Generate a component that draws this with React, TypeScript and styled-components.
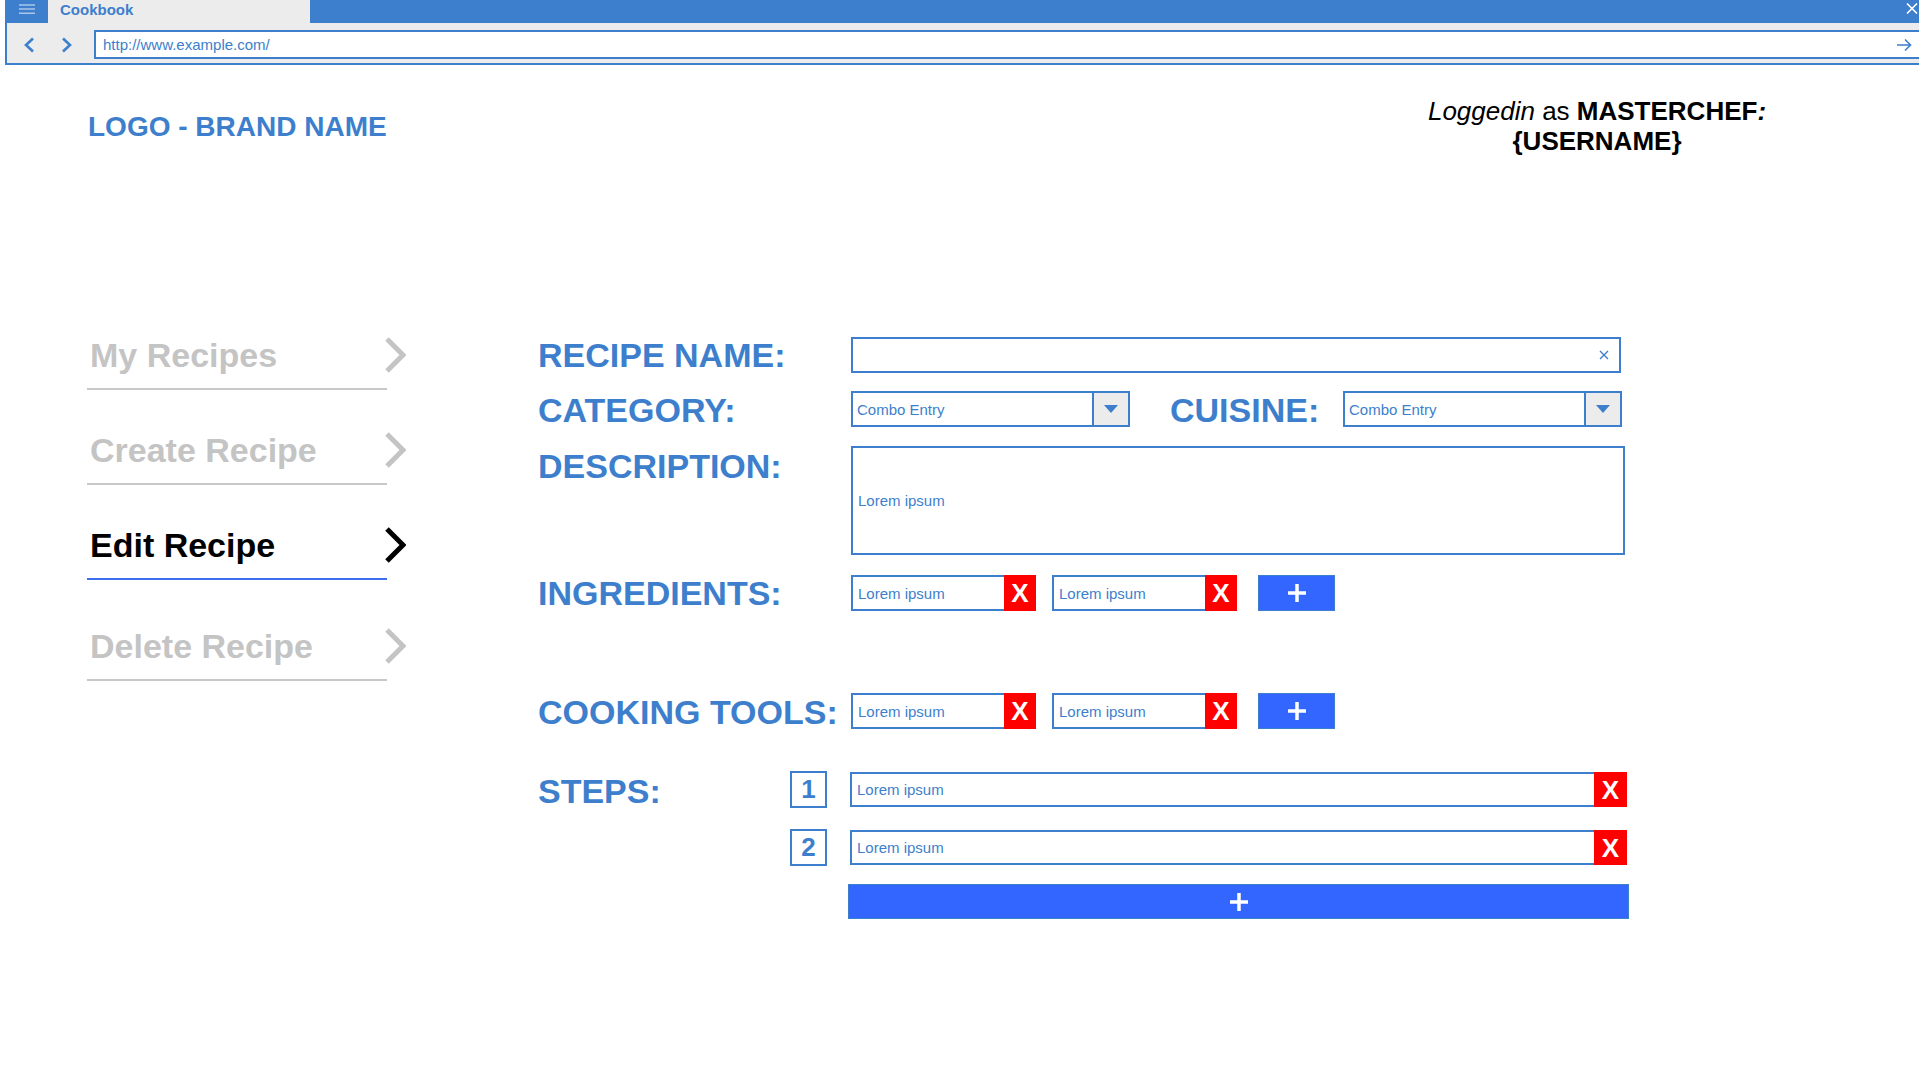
import React from 'react';
import styled, { createGlobalStyle } from 'styled-components';

const BLUE = '#3d7fcc';
const BRIGHT = '#3366ff';
const RED = '#ff0000';
const GRAY = '#ececec';
const FONT = '"Liberation Sans", Arial, Helvetica, sans-serif';

const Global = createGlobalStyle`
  html, body { margin: 0; padding: 0; background: #fff; }
  body { font-family: ${FONT}; width: 1919px; height: 1079px; overflow: hidden; }
  *, *::before, *::after { box-sizing: border-box; }
`;

/* ---------- browser chrome ---------- */
const Chrome = styled.div`
  margin-left: 5px;
`;
const TitleBar = styled.div`
  display: flex;
  height: 23px;
  background: ${BLUE};
`;
const MenuButton = styled.div`
  width: 43px;
  height: 23px;
  display: flex;
`;
const Tab = styled.div`
  width: 262px;
  background: ${GRAY};
  color: ${BLUE};
  font-size: 15px;
  font-weight: 700;
  line-height: 19px;
  padding-left: 12px;
`;
const TitleSpacer = styled.div`
  flex: 1;
`;
const CloseBox = styled.div`
  display: flex;
  padding: 3px 1px 0 0;
`;
const Toolbar = styled.div`
  display: flex;
  align-items: flex-start;
  height: 42px;
  padding-top: 7px;
  background: ${GRAY};
  border-left: 2px solid ${BLUE};
  border-bottom: 2px solid ${BLUE};
`;
const NavArrow = styled.svg<{ $ml: number }>`
  flex: none;
  margin-left: ${(p) => p.$ml}px;
  margin-top: 7px;
`;
const Address = styled.div`
  flex: 1;
  height: 29px;
  margin-left: 21px;
  display: flex;
  align-items: center;
  padding: 0 7px 0 7px;
  background: #fff;
  border: 2px solid ${BLUE};
  border-right: none;
  color: ${BLUE};
  font-size: 15px;
`;
const AddressText = styled.span`
  flex: 1;
`;

/* ---------- header ---------- */
const Header = styled.header`
  display: flex;
  justify-content: space-between;
  align-items: flex-start;
  padding: 31px 122px 0 88px;
`;
const Logo = styled.div`
  margin-top: 15px;
  font-size: 28px;
  line-height: 32px;
  font-weight: 700;
  color: ${BLUE};
`;
const UserBlock = styled.div`
  width: 400px;
  text-align: center;
  font-size: 26px;
  line-height: 30px;
  color: #000;
`;
const Em = styled.span`
  font-style: italic;
`;
const Strong = styled.span<{ $italic?: boolean }>`
  font-weight: 700;
  font-style: ${(p) => (p.$italic ? 'italic' : 'normal')};
`;

/* ---------- main ---------- */
const Main = styled.main`
  display: flex;
  align-items: flex-start;
  margin-top: 179px;
  padding-left: 87px;
`;
const Sidebar = styled.nav`
  width: 319px;
  flex: none;
  display: flex;
  flex-direction: column;
`;
const NavItem = styled.div<{ $mt: number }>`
  display: flex;
  flex-direction: column;
  margin-top: ${(p) => p.$mt}px;
`;
const NavHead = styled.div<{ $active?: boolean }>`
  display: flex;
  align-items: center;
  justify-content: space-between;
  height: 40px;
  padding-left: 3px;
  font-size: 34px;
  line-height: 40px;
  font-weight: 700;
  color: ${(p) => (p.$active ? '#000' : '#c4c4c4')};
`;
const NavLine = styled.div<{ $active?: boolean }>`
  width: 300px;
  height: 2px;
  margin-top: 13px;
  background: ${(p) => (p.$active ? '#3b6ff0' : '#c8c8c8')};
`;

const Form = styled.section`
  margin-left: 132px;
  display: flex;
  flex-direction: column;
`;
const Row = styled.div<{ $mt?: number; $align?: string }>`
  display: flex;
  align-items: ${(p) => p.$align || 'center'};
  margin-top: ${(p) => p.$mt || 0}px;
`;
const Label = styled.div<{ $w?: number; $ml?: number; $dy?: number }>`
  flex: none;
  width: ${(p) => p.$w ?? 313}px;
  margin-left: ${(p) => p.$ml ?? 0}px;
  padding-top: ${(p) => (p.$dy ?? 0) * 2}px;
  font-size: 34px;
  line-height: 40px;
  font-weight: 700;
  color: ${BLUE};
  white-space: nowrap;
`;
const Field = styled.div<{ $w: number; $h: number }>`
  flex: none;
  width: ${(p) => p.$w}px;
  height: ${(p) => p.$h}px;
  display: flex;
  align-items: center;
  padding: 0 10px 0 5px;
  border: 2px solid ${BLUE};
  background: #fff;
  color: ${BLUE};
  font-size: 15px;
`;
const FieldText = styled.span`
  flex: 1;
  white-space: nowrap;
`;
const Combo = styled.div`
  flex: none;
  width: 279px;
  height: 36px;
  display: flex;
  border: 2px solid ${BLUE};
  background: #fff;
`;
const ComboText = styled.div`
  flex: 1;
  display: flex;
  align-items: center;
  padding-left: 4px;
  color: ${BLUE};
  font-size: 15px;
`;
const ComboButton = styled.div`
  width: 36px;
  display: flex;
  align-items: center;
  justify-content: center;
  background: ${GRAY};
  border-left: 2px solid ${BLUE};
`;
const ItemGroup = styled.div<{ $ml?: number; $h?: number }>`
  flex: none;
  display: flex;
  height: ${(p) => p.$h ?? 36}px;
  margin-left: ${(p) => p.$ml ?? 0}px;
`;
const ItemField = styled.div<{ $w: number }>`
  width: ${(p) => p.$w}px;
  display: flex;
  align-items: center;
  padding-left: 5px;
  border: 2px solid ${BLUE};
  border-right: none;
  background: #fff;
  color: ${BLUE};
  font-size: 15px;
  white-space: nowrap;
`;
const RemoveButton = styled.div<{ $w?: number }>`
  width: ${(p) => p.$w ?? 32}px;
  display: flex;
  align-items: center;
  justify-content: center;
  background: ${RED};
  color: #fff;
  font-size: 26px;
  font-weight: 700;
  line-height: 1;
`;
const PlusButton = styled.div<{ $w: number; $h: number; $ml: number; $mt?: number }>`
  flex: none;
  width: ${(p) => p.$w}px;
  height: ${(p) => p.$h}px;
  margin-left: ${(p) => p.$ml}px;
  margin-top: ${(p) => p.$mt ?? 0}px;
  display: flex;
  align-items: center;
  justify-content: center;
  background: ${BRIGHT};
  border: 1px solid ${BLUE};
`;
const StepColumn = styled.div`
  display: flex;
  flex-direction: column;
`;
const StepItem = styled.div<{ $mt?: number }>`
  display: flex;
  align-items: center;
  gap: 23px;
  height: 37px;
  margin-top: ${(p) => p.$mt ?? 0}px;
`;
const NumberBox = styled.div`
  width: 37px;
  height: 37px;
  display: flex;
  align-items: center;
  justify-content: center;
  border: 2px solid ${BLUE};
  color: ${BLUE};
  font-size: 26px;
  font-weight: 700;
`;

/* ---------- icons ---------- */
const Chevron = ({ color }: { color: string }) => (
  <svg width="22" height="36" viewBox="0 0 22 36">
    <polyline points="3,2 19,18 3,34" fill="none" stroke={color} strokeWidth="5" />
  </svg>
);
const Triangle = () => (
  <svg width="14" height="8" viewBox="0 0 14 8">
    <polygon points="0,0 14,0 7,8" fill={BLUE} />
  </svg>
);
const Plus = () => (
  <svg width="20" height="20" viewBox="0 0 20 20">
    <line x1="10" y1="1" x2="10" y2="19" stroke="#fff" strokeWidth="3.5" />
    <line x1="1" y1="10" x2="19" y2="10" stroke="#fff" strokeWidth="3.5" />
  </svg>
);
const SmallX = () => (
  <svg width="10" height="10" viewBox="0 0 10 10">
    <path d="M1 1 L9 9 M9 1 L1 9" stroke={BLUE} strokeWidth="1.4" />
  </svg>
);

const navItems = [
  { label: 'My Recipes', mt: 0 },
  { label: 'Create Recipe', mt: 40 },
  { label: 'Edit Recipe', mt: 40, active: true },
  { label: 'Delete Recipe', mt: 46 },
];

const ItemPair = ({ ml }: { ml: number }) => (
  <ItemGroup $ml={ml}>
    <ItemField $w={153}>Lorem ipsum</ItemField>
    <RemoveButton>X</RemoveButton>
  </ItemGroup>
);

export default function App() {
  return (
    <>
      <Global />
      <Chrome>
        <TitleBar>
          <MenuButton>
            <svg width="43" height="23" viewBox="0 0 43 23">
              <path d="M14 5 H30 M14 9 H30 M14 13.3 H30" stroke="#a9c6ec" strokeWidth="1.4" />
            </svg>
          </MenuButton>
          <Tab>Cookbook</Tab>
          <TitleSpacer />
          <CloseBox>
            <svg width="12" height="11" viewBox="0 0 12 11">
              <path d="M1 0.5 L11 10.5 M11 0.5 L1 10.5" stroke="#fff" strokeWidth="1.6" />
            </svg>
          </CloseBox>
        </TitleBar>
        <Toolbar>
          <NavArrow $ml={16} width="12" height="16" viewBox="0 0 12 16">
            <polyline points="10,1.5 3,8 10,14.5" fill="none" stroke={BLUE} strokeWidth="2.6" />
          </NavArrow>
          <NavArrow $ml={26} width="12" height="16" viewBox="0 0 12 16">
            <polyline points="2,1.5 9,8 2,14.5" fill="none" stroke={BLUE} strokeWidth="2.6" />
          </NavArrow>
          <Address>
            <AddressText>http://www.example.com/</AddressText>
            <svg width="15" height="14" viewBox="0 0 15 14">
              <path d="M0 7 H13.5 M8 1.5 L13.5 7 L8 12.5" fill="none" stroke={BLUE} strokeWidth="1.6" />
            </svg>
          </Address>
        </Toolbar>
      </Chrome>

      <Header>
        <Logo>LOGO - BRAND NAME</Logo>
        <UserBlock>
          <Em>Loggedin</Em> as <Strong>MASTERCHEF</Strong>
          <Strong $italic>:</Strong>
          <br />
          <Strong>{'{USERNAME}'}</Strong>
        </UserBlock>
      </Header>

      <Main>
        <Sidebar>
          {navItems.map((n) => (
            <NavItem key={n.label} $mt={n.mt}>
              <NavHead $active={n.active}>
                <span>{n.label}</span>
                <Chevron color={n.active ? '#000' : '#c4c4c4'} />
              </NavHead>
              <NavLine $active={n.active} />
            </NavItem>
          ))}
        </Sidebar>

        <Form>
          <Row>
            <Label>RECIPE NAME:</Label>
            <Field $w={770} $h={36}>
              <FieldText />
              <SmallX />
            </Field>
          </Row>

          <Row $mt={13}>
            <Label $dy={1}>CATEGORY:</Label>
            <Combo>
              <ComboText>Combo Entry</ComboText>
              <ComboButton>
                <Triangle />
              </ComboButton>
            </Combo>
            <Label $w={173} $ml={40} $dy={1}>CUISINE:</Label>
            <Combo>
              <ComboText>Combo Entry</ComboText>
              <ComboButton>
                <Triangle />
              </ComboButton>
            </Combo>
          </Row>

          <Row $mt={16} $align="flex-start">
            <Label>DESCRIPTION:</Label>
            <Field $w={774} $h={109}>
              <FieldText>Lorem ipsum</FieldText>
            </Field>
          </Row>

          <Row $mt={18}>
            <Label>INGREDIENTS:</Label>
            <ItemPair ml={0} />
            <ItemPair ml={16} />
            <PlusButton $w={77} $h={36} $ml={21}>
              <Plus />
            </PlusButton>
          </Row>

          <Row $mt={77}>
            <Label $dy={1}>COOKING TOOLS:</Label>
            <ItemPair ml={0} />
            <ItemPair ml={16} />
            <PlusButton $w={77} $h={36} $ml={21}>
              <Plus />
            </PlusButton>
          </Row>

          <Row $mt={39} $align="flex-start">
            <Label $w={252}>STEPS:</Label>
            <StepColumn>
              {[1, 2].map((n, i) => (
                <StepItem key={n} $mt={i === 0 ? 0 : 21}>
                  <NumberBox>{n}</NumberBox>
                  <ItemGroup $h={35}>
                    <ItemField $w={744}>Lorem ipsum</ItemField>
                    <RemoveButton $w={33}>X</RemoveButton>
                  </ItemGroup>
                </StepItem>
              ))}
              <PlusButton $w={781} $h={35} $ml={58} $mt={18}>
                <Plus />
              </PlusButton>
            </StepColumn>
          </Row>
        </Form>
      </Main>
    </>
  );
}
